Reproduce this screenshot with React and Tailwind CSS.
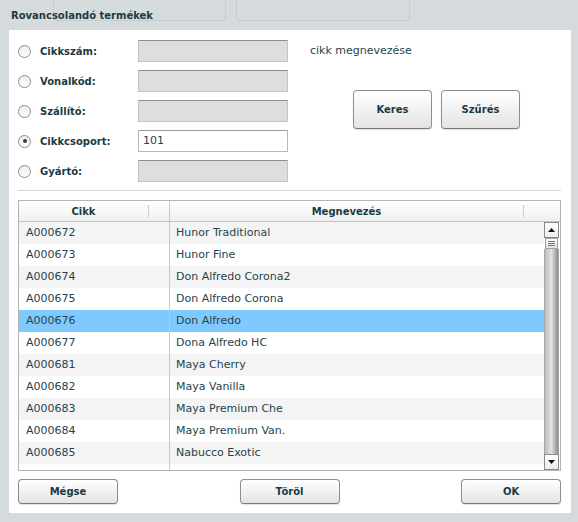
import React from "react";

const rows = [
  ["A000672", "Hunor Traditional"],
  ["A000673", "Hunor Fine"],
  ["A000674", "Don Alfredo Corona2"],
  ["A000675", "Don Alfredo Corona"],
  ["A000676", "Don Alfredo"],
  ["A000677", "Dona Alfredo HC"],
  ["A000681", "Maya Cherry"],
  ["A000682", "Maya Vanilla"],
  ["A000683", "Maya Premium Che"],
  ["A000684", "Maya Premium Van."],
  ["A000685", "Nabucco Exotic"],
  ["", ""],
];

const fields = [
  { label: "Cikkszám:", value: null, checked: false },
  { label: "Vonalkód:", value: null, checked: false },
  { label: "Szállító:", value: null, checked: false },
  { label: "Cikkcsoport:", value: "101", checked: true },
  { label: "Gyártó:", value: null, checked: false },
];

function Radio({ checked }) {
  return (
    <div className="w-[13px] h-[13px] rounded-full border border-[#8c8c8c] bg-linear-to-b from-[#ececec] to-white flex items-center justify-center shrink-0">
      {checked && <div className="w-[4px] h-[4px] rounded-full bg-[#3a3a3a]" />}
    </div>
  );
}

function Btn({ children, className }) {
  return (
    <div
      className={
        "rounded-[4px] border border-[#8e8e8e] border-b-[#7a7a7a] bg-linear-to-b from-white to-[#e4e4e4] shadow-[0_1px_1px_rgba(0,0,0,0.12)] flex items-center justify-center font-bold text-[10px] text-[#1c3a44] " +
        className
      }
    >
      {children}
    </div>
  );
}

export default function App() {
  return (
    <div className="relative w-[578px] h-[522px] overflow-hidden bg-[#d5dadc] font-['DejaVu_Sans',sans-serif] text-[#1c3a44]">
      <div className="absolute left-[53px] top-[-6px] w-[173px] h-[27px] rounded-[4px] border border-[#c6cbce]" />
      <div className="absolute left-[236px] top-[-6px] w-[174px] h-[27px] rounded-[4px] border border-[#c6cbce]" />

      <div className="relative h-[30px] pl-[11px] flex items-center text-[10px] font-bold">
        Rovancsolandó termékek
      </div>

      <div className="relative ml-[9px] mr-[7px] h-[483px] bg-white pl-[9px] pr-[10px] pt-[10px]">
        {/* form */}
        <div className="flex">
          <div className="flex flex-col gap-[8px]">
            {fields.map((f) => (
              <div key={f.label} className="flex items-center h-[22px]">
                <Radio checked={f.checked} />
                <div className="ml-[9px] w-[98px] text-[10px] font-bold">{f.label}</div>
                {f.value !== null ? (
                  <div className="w-[150px] h-[22px] border border-[#b8b8b8] border-t-[#9a9a9a] bg-white pl-[4px] flex items-center text-[11px] text-[#27434b]">
                    {f.value}
                  </div>
                ) : (
                  <div className="w-[150px] h-[22px] border border-[#c4c4c4] border-t-[#8f8f8f] bg-[#dedede]" />
                )}
              </div>
            ))}
          </div>
          <div className="ml-[22px] flex flex-col">
            <div className="h-[22px] flex items-center text-[11px] text-[#27434b]">cikk megnevezése</div>
            <div className="mt-[28px] ml-[43px] flex gap-[9px]">
              <Btn className="w-[79px] h-[39px]">Keres</Btn>
              <Btn className="w-[79px] h-[39px]">Szűrés</Btn>
            </div>
          </div>
        </div>

        <div className="mt-[8px] h-px bg-[#d4d8d8]" />

        {/* table */}
        <div className="mt-[9px] h-[271px] border border-[#b4b4b4] flex flex-col">
          <div className="h-[21px] border-b border-[#c4c4c4] bg-linear-to-b from-white to-[#f0f0f0] flex text-[10px] font-bold">
            <div className="w-[129px] flex items-center justify-center">Cikk</div>
            <div className="w-px h-[13px] self-center bg-[#cfcfcf]" />
            <div className="w-[20px]" />
            <div className="w-px bg-[#c8c8c8]" />
            <div className="w-[353px] flex items-center justify-center">Megnevezés</div>
            <div className="w-px h-[13px] self-center bg-[#cfcfcf]" />
            <div className="flex-1" />
          </div>
          <div className="flex h-[248px]">
            <div className="flex-1 overflow-hidden">
              {rows.map(([code, name], i) => {
                const sel = code === "A000676";
                const bg = sel ? "bg-[#80c9ff]" : i % 2 === 0 ? "bg-[#f4f4f4]" : "bg-white";
                return (
                  <div key={i} className={"flex h-[22px] text-[11px] text-[#27434b] " + bg}>
                    <div className="w-[151px] shrink-0 pl-[7px] border-r border-[#c8c8c8] flex items-center">{code}</div>
                    <div className="pl-[6px] flex items-center whitespace-nowrap">{name}</div>
                  </div>
                );
              })}
            </div>
            <div className="w-[15px] mr-[1px] flex flex-col">
              <div className="h-[16px] border border-[#8a8a8a] bg-linear-to-b from-white to-[#ececec] flex items-center justify-center">
                <svg width="7" height="4" viewBox="0 0 7 4"><path d="M0 4 L3.5 0 L7 4 Z" fill="#111" /></svg>
              </div>
              <div className="h-[11px] mx-[1px] border border-[#a0a0a0] bg-linear-to-b from-white to-[#e0e0e0] flex flex-col items-center justify-center gap-[1px]">
                <div className="w-[7px] h-px bg-[#777]" />
                <div className="w-[7px] h-px bg-[#777]" />
                <div className="w-[7px] h-px bg-[#777]" />
              </div>
              <div className="flex-1 border-x border-[#a5a5a5] bg-linear-to-r from-[#bdbdbd] via-[#e2e2e2] to-[#8c8c8c]" />
              <div className="h-[16px] border border-[#8a8a8a] bg-linear-to-b from-white to-[#ececec] flex items-center justify-center">
                <svg width="7" height="4" viewBox="0 0 7 4"><path d="M0 0 L3.5 4 L7 0 Z" fill="#111" /></svg>
              </div>
            </div>
          </div>
        </div>

        {/* bottom buttons */}
        <div className="mt-[8px] flex justify-between">
          <Btn className="w-[100px] h-[25px]">Mégse</Btn>
          <Btn className="w-[100px] h-[25px]">Töröl</Btn>
          <Btn className="w-[100px] h-[25px]">OK</Btn>
        </div>
      </div>
    </div>
  );
}
